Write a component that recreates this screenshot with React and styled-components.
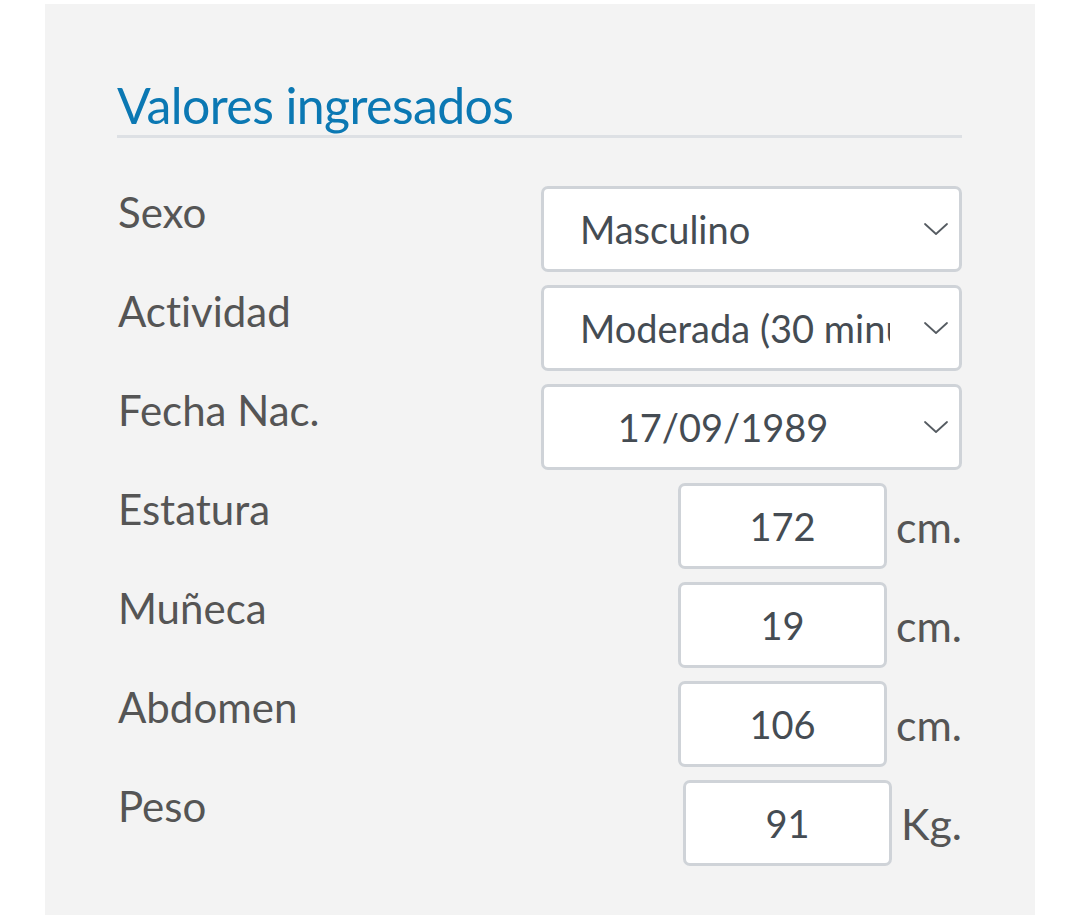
import React from 'react'
import styled, { createGlobalStyle } from 'styled-components'

const GlobalStyle = createGlobalStyle`
  html, body {
    margin: 0;
    padding: 0;
    background: #fff;
    font-family: Lato, "Open Sans", sans-serif;
    font-variant-ligatures: none;
  }
`

const selects = [
  { label: 'Sexo', value: 'Masculino' },
  { label: 'Actividad', value: 'Moderada (30 minutos diarios)' },
  { label: 'Fecha Nac.', value: '17/09/1989', centered: true },
]

const measures = [
  { label: 'Estatura', value: '172', unit: 'cm.' },
  { label: 'Muñeca', value: '19', unit: 'cm.' },
  { label: 'Abdomen', value: '106', unit: 'cm.' },
  { label: 'Peso', value: '91', unit: 'Kg.' },
]

const Chevron = () => (
  <ChevronIcon viewBox="0 0 24 12" width="24" height="12">
    <path d="M1 1 L12 11 L23 1" fill="none" stroke="#555b61" strokeWidth="1.8" strokeLinecap="round" strokeLinejoin="round" />
  </ChevronIcon>
)

const App = () => {
  return (
    <>
      <GlobalStyle />
      <Panel>
        <Title>Valores ingresados</Title>
        <Form>
          {selects.map((s) => (
            <Row key={s.label}>
              <Label>{s.label}</Label>
              <Select>
                <SelectValue $centered={s.centered}>{s.value}</SelectValue>
                <Chevron />
              </Select>
            </Row>
          ))}
          {measures.map((m) => (
            <Row key={m.label}>
              <Label>{m.label}</Label>
              <Measure>
                <NumberBox>{m.value}</NumberBox>
                <Unit>{m.unit}</Unit>
              </Measure>
            </Row>
          ))}
        </Form>
      </Panel>
    </>
  )
}

const Panel = styled.div`
  margin: 4px 45px 0;
  width: 990px;
  box-sizing: border-box;
  height: 911px;
  background: #f3f3f3;
  padding: 71px 73px 0 72px;
`

const Title = styled.h2`
  margin: 0 0 48px;
  font-family: Lato, sans-serif;
  font-weight: 400;
  font-size: 50px;
  line-height: 60px;
  letter-spacing: -0.6px;
  color: #0b78b3;
  border-bottom: 3px solid #dde0e4;
`

const Form = styled.div`
  display: flex;
  flex-direction: column;
  gap: 13px;
`

const Row = styled.div`
  display: flex;
  justify-content: space-between;
  align-items: flex-start;
  height: 86px;
`

const Label = styled.div`
  font-size: 42px;
  line-height: 50px;
  color: #555555;
  padding-top: 1px;
  padding-left: 1px;
`

const Select = styled.div`
  width: 421px;
  height: 86px;
  box-sizing: border-box;
  background: #fff;
  border: 3px solid #cfd3d8;
  border-radius: 7px;
  display: flex;
  align-items: center;
  padding: 0 11px 0 36px;
  gap: 34px;
`

const SelectValue = styled.div`
  flex: 1;
  min-width: 0;
  overflow: hidden;
  white-space: nowrap;
  font-size: 38px;
  color: #454c53;
  text-align: ${(p) => (p.$centered ? 'center' : 'left')};
  padding-right: ${(p) => (p.$centered ? '24px' : '0')};
`

const ChevronIcon = styled.svg`
  flex-shrink: 0;
`

const Measure = styled.div`
  display: flex;
  align-items: center;
  gap: 9px;
  height: 86px;
`

const NumberBox = styled.div`
  width: 209px;
  height: 86px;
  box-sizing: border-box;
  background: #fff;
  border: 3px solid #cfd3d8;
  border-radius: 7px;
  display: flex;
  align-items: center;
  justify-content: center;
  font-size: 38px;
  color: #454c53;
`

const Unit = styled.div`
  font-size: 43px;
  color: #555555;
  padding-top: 0;
`

export default App
